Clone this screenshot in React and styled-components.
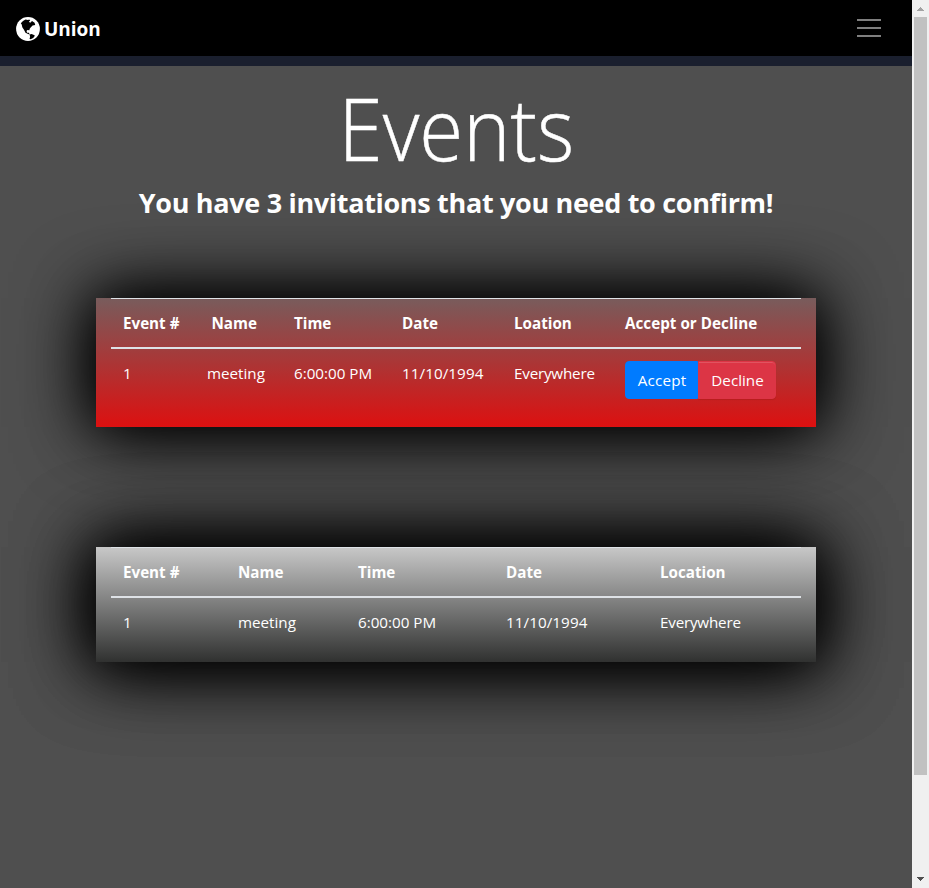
import React from 'react';
import styled, { createGlobalStyle } from 'styled-components';

const GlobalStyle = createGlobalStyle`
  *, *::before, *::after { box-sizing: border-box; }
  body {
    margin: 0;
    overflow: hidden;
    background: #4f4f4f;
    color: #fff;
    font-family: "Open Sans", "Noto Sans", sans-serif;
    font-size: 15.2px;
    line-height: 24px;
  }
`;

const Window = styled.div`
  display: grid;
  grid-template-columns: minmax(0, 1fr) 17px;
  height: 888px;
  overflow: hidden;
`;

const Page = styled.div`
  display: flex;
  flex-direction: column;
  overflow: hidden;
  background: #4f4f4f;
`;

const Navbar = styled.nav`
  display: flex;
  flex: none;
  align-items: center;
  justify-content: space-between;
  height: 66px;
  padding: 0 31px 0 16px;
  background: #000;
  border-bottom: 10px solid #1a1f2e;
`;

const Brand = styled.a`
  display: flex;
  align-items: center;
  gap: 4px;
  padding-top: 2px;
  font-size: 19px;
  font-weight: 700;
  letter-spacing: -0.05px;
  color: #fff;
`;

const GlobeIcon = styled.svg`
  display: block;
  width: 24px;
  height: 24px;
`;

const Toggler = styled.button`
  display: flex;
  flex-direction: column;
  gap: 6px;
  padding: 0;
  border: 0;
  background: none;
`;

const TogglerBar = styled.span`
  width: 24px;
  height: 2px;
  background: #7f7f7f;
`;

const Heading = styled.header`
  display: flex;
  flex: none;
  flex-direction: column;
  align-items: center;
  height: 232px;
  padding-top: 9px;
`;

const Title = styled.h1`
  margin: 0;
  font-size: 87px;
  font-weight: 300;
  line-height: 105px;
  transform: scaleX(0.918);
  -webkit-text-stroke: 0.5px #fff;
`;

const Subtitle = styled.h2`
  margin: 11px 0 0;
  font-size: 27px;
  font-weight: 700;
  line-height: 24px;
  letter-spacing: -0.32px;
  white-space: nowrap;
`;

const Panel = styled.section`
  flex: none;
  width: 720px;
  margin: 0 auto 120px 96px;
  padding: 0 15px 16px;
  background: ${(p) => (p.$pending
    ? 'linear-gradient(#785c5c, #dd1010)'
    : 'linear-gradient(#c8c8c8, #303130)')};
  box-shadow: ${(p) => (p.$pending
    ? '0 0 60px #000, 0 0 80px #000'
    : '0 0 60px #000, 0 0 80px #000, 0 0 80px rgba(0, 0, 0, 0.5)')};
`;

const Row = styled.div`
  display: grid;
  grid-template-columns: ${(p) => p.$columns};
  align-items: start;
  padding: 12px 0 12px 12px;
  white-space: nowrap;
`;

const HeadRow = styled(Row)`
  height: 51px;
  border-top: 1px solid #dee2e6;
  border-bottom: 2px solid #dee2e6;
  font-weight: 700;
  letter-spacing: -0.1px;
`;

const Cell = styled.div`
  padding-left: ${(p) => p.$indent || 0}px;
  letter-spacing: ${(p) => p.$tracking || 0}px;
`;

const ButtonGroup = styled.div`
  display: flex;
`;

const Button = styled.button`
  width: ${(p) => (p.$danger ? 78 : 73)}px;
  height: 38px;
  padding: 0 0 0 1px;
  border: 1px solid ${(p) => (p.$danger ? '#dc3545' : '#007bff')};
  border-radius: ${(p) => (p.$danger ? '0 4px 4px 0' : '4px 0 0 4px')};
  background: ${(p) => (p.$danger ? '#dc3545' : '#007bff')};
  box-shadow: ${(p) => (p.$danger
    ? 'inset 0 1px 0 rgba(255, 255, 255, 0.15), 0 1px 1px rgba(0, 0, 0, 0.075)'
    : 'none')};
  color: #fff;
  font: inherit;
  letter-spacing: ${(p) => (p.$danger ? 0 : 0.2)}px;
`;

const Scrollbar = styled.aside`
  display: flex;
  flex-direction: column;
  align-items: center;
  justify-content: space-between;
  padding: 7px 0;
  background: #f0f0f0;
`;

const Thumb = styled.div`
  width: 13px;
  height: 758px;
  margin: 6px 1px 0 0;
  background: #c1c1c1;
`;

const Arrow = styled.svg`
  display: block;
  width: 7px;
  height: 4px;
  margin-right: 1px;
  fill: ${(p) => (p.$active ? '#505050' : '#a3a3a3')};
`;

const Spacer = styled.div`
  flex: 1;
`;

const pendingColumns = '84px 87px 108px 112px 111px 1fr';
const confirmedColumns = '115px 120px 148px 154px 1fr';

export default function App() {
  return (
    <>
      <GlobalStyle />
      <Window>
        <Page>
          <Navbar>
            <Brand>
              <GlobeIcon viewBox="0 0 24 24" aria-hidden="true">
                <circle cx="12" cy="12" r="11.9" fill="#fff" />
                <path
                  fill="#000"
                  d="M9.5 2.6 12 3l1.2-.6 1 1.2-1.4 1.2 1.5.9 1.7-1.6 2.6 1.7.6 2.2-2.6.5-1.5 1.6-1.4 1.6-.3 1.6-2-.4-.9 1.2.6 1.6 1.8.1.8 1.6-1.6-.3-2.6-1.4-1.4-2.6-1.8-2.8-.6-2.8L4.8 6.2 7 4.1z M13.6 17.6l2-.6 2.4.9.9.9-1.7 2.2-2.6 1.2-1.1-.4.6-1.8z"
                />
              </GlobeIcon>
              Union
            </Brand>
            <Toggler aria-label="Toggle navigation">
              <TogglerBar /><TogglerBar /><TogglerBar />
            </Toggler>
          </Navbar>
          <Heading>
            <Title>Events</Title>
            <Subtitle>You have 3 invitations that you need to confirm!</Subtitle>
          </Heading>
          <Panel $pending>
            <HeadRow $columns={pendingColumns}>
              <Cell>Event #</Cell>
              <Cell $indent={4.5}>Name</Cell>
              <Cell>Time</Cell>
              <Cell>Date</Cell>
              <Cell>Loation</Cell>
              <Cell $tracking={0.03}>Accept or Decline</Cell>
            </HeadRow>
            <Row $columns={pendingColumns}>
              <Cell>1</Cell>
              <Cell>meeting</Cell>
              <Cell>6:00:00 PM</Cell>
              <Cell $tracking={0.08}>11/10/1994</Cell>
              <Cell $tracking={-0.2}>Everywhere</Cell>
              <ButtonGroup>
                <Button>Accept</Button>
                <Button $danger>Decline</Button>
              </ButtonGroup>
            </Row>
          </Panel>
          <Panel>
            <HeadRow $columns={confirmedColumns}>
              <Cell>Event #</Cell>
              <Cell>Name</Cell>
              <Cell>Time</Cell>
              <Cell>Date</Cell>
              <Cell>Location</Cell>
            </HeadRow>
            <Row $columns={confirmedColumns}>
              <Cell>1</Cell>
              <Cell>meeting</Cell>
              <Cell>6:00:00 PM</Cell>
              <Cell $tracking={0.08}>11/10/1994</Cell>
              <Cell $tracking={-0.2}>Everywhere</Cell>
            </Row>
          </Panel>
        </Page>
        <Scrollbar>
          <Arrow viewBox="0 0 7 4"><path d="M3 0h1v1h1v1h1v1h1v1H0V3h1V2h1V1h1z" /></Arrow>
          <Thumb />
          <Spacer />
          <Arrow $active viewBox="0 0 7 4"><path d="M0 0h7v1H6v1H5v1H4v1H3V3H2V2H1V1H0z" /></Arrow>
        </Scrollbar>
      </Window>
    </>
  );
}
